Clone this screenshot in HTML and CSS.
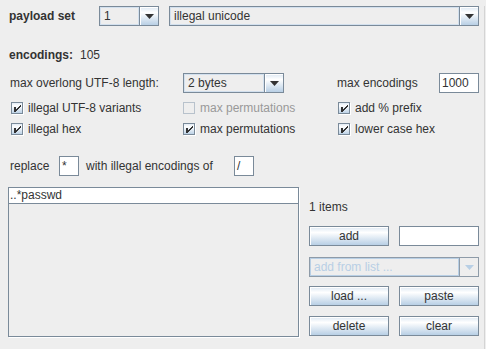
FILE: index.html
```html
<!DOCTYPE html>
<html lang="en">
<head>
    <meta charset="UTF-8">
    <title>payload set</title>
    <link rel="stylesheet" href="styles.css">
</head>
<body>

    <svg class="defs" width="0" height="0">
        <defs>
            <linearGradient id="ocean" x1="0" y1="0" x2="0" y2="1">
                <stop offset="0" stop-color="#dde8f3"/>
                <stop offset="0.3" stop-color="#ffffff"/>
                <stop offset="1" stop-color="#b8cfe5"/>
            </linearGradient>
            <symbol id="box-on" viewBox="0 0 13 13">
                <rect x="1.5" y="1.5" width="11" height="11" fill="none" stroke="#ffffff"/>
                <rect x="0.5" y="0.5" width="11" height="11" fill="url(#ocean)" stroke="#7a8a99"/>
                <path d="M3 5h2v5h-2z M9 3h1v2h-1z M8 4h1v2h-1z M7 5h1v2h-1z M6 6h1v2h-1z M5 7h1v2h-1z" fill="#333333"/>
            </symbol>
            <symbol id="box-off" viewBox="0 0 13 13">
                <rect x="0.5" y="0.5" width="11" height="11" fill="none" stroke="#b8c2cc"/>
            </symbol>
        </defs>
    </svg>

    <div class="panel">
        <div class="row row-set">
            <span class="label-set">payload set</span>
            <div class="combo combo-num">
                <span class="combo-value">1</span>
                <span class="combo-arrow"><svg width="9" height="5" viewBox="0 0 9 5"><path d="M0 0h9l-4.5 5z" fill="#333333"/></svg></span>
            </div>
            <div class="combo combo-type">
                <span class="combo-value">illegal unicode</span>
                <span class="combo-arrow"><svg width="9" height="5" viewBox="0 0 9 5"><path d="M0 0h9l-4.5 5z" fill="#333333"/></svg></span>
            </div>
        </div>

        <div class="row row-count">
            <span class="label-count">encodings:</span>
            <span>105</span>
        </div>

        <div class="row row-len">
            <span class="label-len">max overlong UTF-8 length:</span>
            <div class="combo combo-len">
                <span class="combo-value">2 bytes</span>
                <span class="combo-arrow"><svg width="9" height="5" viewBox="0 0 9 5"><path d="M0 0h9l-4.5 5z" fill="#333333"/></svg></span>
            </div>
            <span class="label-max">max encodings</span>
            <span class="field field-max">1000</span>
        </div>

        <div class="checks">
            <label class="check"><svg width="13" height="13"><use href="#box-on"/></svg>illegal UTF-8 variants</label>
            <label class="check disabled"><svg width="13" height="13"><use href="#box-off"/></svg>max permutations</label>
            <label class="check"><svg width="13" height="13"><use href="#box-on"/></svg>add % prefix</label>
            <label class="check"><svg width="13" height="13"><use href="#box-on"/></svg>illegal hex</label>
            <label class="check"><svg width="13" height="13"><use href="#box-on"/></svg>max permutations</label>
            <label class="check"><svg width="13" height="13"><use href="#box-on"/></svg>lower case hex</label>
        </div>

        <div class="row row-replace">
            <span class="label-replace">replace</span>
            <span class="field field-char">*</span>
            <span class="label-with">with illegal encodings of</span>
            <span class="field field-char">/</span>
        </div>

        <div class="lower">
            <div class="list">
                <div class="list-item">..*passwd</div>
            </div>
            <div class="side">
                <div class="items">1 items</div>
                <div class="pair pair-add">
                    <span class="btn">add</span>
                    <span class="field"></span>
                </div>
                <div class="combo combo-list disabled">
                    <span class="combo-value">add from list ...</span>
                    <span class="combo-arrow"><svg width="9" height="5" viewBox="0 0 9 5"><path d="M0 0h9l-4.5 5z" fill="#b8cfe5"/></svg></span>
                </div>
                <div class="pair pair-load">
                    <span class="btn">load ...</span>
                    <span class="btn">paste</span>
                </div>
                <div class="pair pair-delete">
                    <span class="btn">delete</span>
                    <span class="btn">clear</span>
                </div>
            </div>
        </div>
    </div>

</body>
</html>
```

FILE: styles.css
```css
* {
    box-sizing: border-box;
}

body {
    margin: 0;
    background: #eeeeee;
    font-family: "Liberation Sans", Arial, sans-serif;
    font-size: 12px;
    color: #333333;
}

.defs {
    display: block;
    width: 0;
    height: 0;
}

.panel {
    width: 485px;
    height: 349px;
    border-right: 1px solid #d4d4d4;
}

.row {
    display: flex;
    align-items: center;
    height: 20px;
}

/* top row */
.row-set {
    margin-top: 6px;
    padding-left: 9px;
}

.label-set {
    width: 90px;
    font-weight: bold;
}

.row-count {
    margin-top: 19px;
    padding-left: 9px;
}

.label-count {
    width: 71px;
    font-weight: bold;
}

.row-len {
    margin-top: 8px;
    padding-left: 10px;
}

.label-len {
    width: 173px;
}

.label-max {
    width: 102px;
    margin-left: 53px;
}

/* combo boxes */
.combo {
    display: flex;
    height: 20px;
    border: 1px solid #7a8a99;
    background: #eeeeee;
}

.combo-value {
    flex: 1;
    padding-left: 3px;
    line-height: 16px;
    border: 1px solid #d2e0ee;
    white-space: nowrap;
    overflow: hidden;
}

.combo-arrow {
    width: 19px;
    display: flex;
    align-items: center;
    justify-content: center;
    border-left: 1px solid #7a8a99;
    background: linear-gradient(#dde8f3 0%, #ffffff 30%, #b8cfe5 100%);
    box-shadow: inset 1px 1px 0 #ffffff;
}

.combo-num {
    width: 60px;
}

.combo-type {
    width: 310px;
    margin-left: 10px;
}

.combo-len {
    width: 101px;
}

.combo-list {
    width: 170px;
    margin-top: 11px;
}

.combo.disabled {
    border-color: #8e9ba8;
}

.combo.disabled .combo-value {
    color: #b8cfe5;
    border-color: #b8cfe5;
}

.combo.disabled .combo-arrow {
    background: #eeeeee;
    border-left-color: #8e9ba8;
    box-shadow: none;
}

/* text fields */
.field {
    display: block;
    height: 20px;
    line-height: 18px;
    padding-left: 2px;
    background: #ffffff;
    border: 1px solid #7a8a99;
}

.field-max {
    width: 40px;
}

.field-char {
    width: 20px;
}

/* check boxes */
.checks {
    display: grid;
    grid-template-columns: 172px 155px auto;
    grid-auto-rows: 20px;
    row-gap: 1px;
    margin-top: 5px;
    padding-left: 11px;
}

.check {
    display: flex;
    align-items: center;
    gap: 4px;
    white-space: nowrap;
}

.check svg {
    flex: none;
}

.check.disabled {
    color: #999999;
}

.row-replace {
    margin-top: 17px;
    padding-left: 10px;
}

.label-replace {
    width: 49px;
}

.label-with {
    width: 155px;
    padding-left: 7px;
}

/* list and buttons */
.lower {
    display: grid;
    grid-template-columns: 291px 170px;
    column-gap: 10px;
    margin-top: 11px;
    padding-left: 8px;
}

.list {
    height: 150px;
    border: 1px solid #7a8a99;
    box-shadow: 1px 1px 0 #ffffff;
    background: #eeeeee;
}

.list-item {
    height: 16px;
    line-height: 12px;
    padding: 1px 0 0 1px;
    background: #ffffff;
    border-bottom: 1px solid #7a8a99;
}

.items {
    height: 20px;
    line-height: 20px;
    margin-top: 10px;
}

.pair {
    display: grid;
    grid-template-columns: 80px 80px;
    column-gap: 10px;
    height: 20px;
}

.pair-add {
    margin-top: 9px;
}

.pair-load {
    margin-top: 9px;
}

.pair-delete {
    margin-top: 10px;
}

.btn {
    display: block;
    height: 20px;
    line-height: 18px;
    text-align: center;
    border: 1px solid #7a8a99;
    background: linear-gradient(#dde8f3 0%, #ffffff 30%, #b8cfe5 100%);
    box-shadow: inset 1px 1px 0 #ffffff;
}
```
